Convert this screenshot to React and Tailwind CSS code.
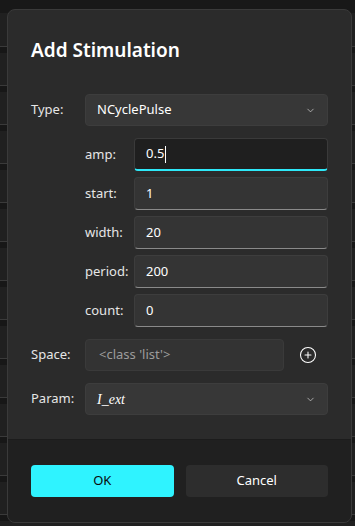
import { ChevronDown, CirclePlus } from 'lucide-react';

const font = { fontFamily: '"Noto Sans", "Open Sans", sans-serif' };

const params = [
  { name: 'amp', value: '0.5', focused: true },
  { name: 'start', value: '1' },
  { name: 'width', value: '20' },
  { name: 'period', value: '200' },
  { name: 'count', value: '0' },
];

const App = () => {
  return (
    <div className="relative w-[355px] h-[526px] overflow-hidden bg-[#1e1e1e] font-['Noto_Sans',sans-serif]">
      {/* Background list behind the dialog */}
      <div className="h-[13px] bg-[#181818]" />
      <div className="h-[34px] bg-[#202020] border-b border-[#3a3a3a]" />
      {Array.from({ length: 13 }).map((_, i) => (
        <div key={i} className="h-[39px] flex flex-col border-b border-[#3a3a3a]">
          <div className="h-[6px] bg-[#171717]" />
          <div className="flex-1 bg-[#202020]" />
        </div>
      ))}

      {/* Dialog */}
      <div className="absolute left-[7px] top-[9px] w-[345px] h-[514px] rounded-lg border border-[#3a3a3a] bg-[#2b2b2b] overflow-hidden flex flex-col">
        <div className="flex-1 px-[23px]">
          <h2 className="mt-[26px] text-[19px] font-semibold text-white leading-[28px]">Add Stimulation</h2>

          <div className="mt-[30px] flex items-center h-[32px]">
            <span className="w-[54px] text-[13px] text-[#e6e6e6]">Type:</span>
            <div className="flex-1 h-[32px] rounded bg-[#373737] border border-[#3d3d3d] flex items-center justify-between pl-[11px] pr-[11px]">
              <span className="text-[13px] text-white">NCyclePulse</span>
              <ChevronDown size={11} strokeWidth={1.6} className="text-[#d0d0d0]" />
            </div>
          </div>

          <div className="mt-[12px] ml-[54px] flex flex-col gap-[6px]">
            {params.map((p) => (
              <div key={p.name} className="flex items-center h-[33px]">
                <span className="w-[49px] text-[13px] text-[#e6e6e6]">{p.name}:</span>
                {p.focused ? (
                  <div className="flex-1 h-[33px] rounded bg-[#1f1f1f] border border-[#3a3a3a] border-b-2 border-b-[#2ee8f8] flex items-center pl-[11px]">
                    <span className="text-[13px] text-white">{p.value}</span>
                    <span className="w-px h-[17px] bg-white ml-px" />
                  </div>
                ) : (
                  <div className="flex-1 h-[33px] rounded bg-[#343434] border border-[#3d3d3d] border-b-[#8a8a8a] flex items-center pl-[11px]">
                    <span className="text-[13px] text-white">{p.value}</span>
                  </div>
                )}
              </div>
            ))}
          </div>

          <div className="mt-[12px] flex items-center h-[32px]">
            <span className="w-[54px] text-[13px] text-[#e6e6e6]">Space:</span>
            <div className="w-[199px] h-[32px] rounded bg-[#333333] border border-[#3a3a3a] flex items-center pl-[13px]">
              <span className="text-[13px] text-[#9c9c9c]">&lt;class 'list'&gt;</span>
            </div>
            <div className="flex-1 flex justify-center pl-[3px]">
              <CirclePlus size={18} strokeWidth={1.4} className="text-white" />
            </div>
          </div>

          <div className="mt-[12px] flex items-center h-[32px]">
            <span className="w-[54px] text-[13px] text-[#e6e6e6]">Param:</span>
            <div className="flex-1 h-[32px] rounded bg-[#373737] border border-[#3d3d3d] flex items-center justify-between pl-[11px] pr-[11px]">
              <span className="text-[14px] italic text-white font-['Liberation_Serif',serif]">I_ext</span>
              <ChevronDown size={11} strokeWidth={1.6} className="text-[#d0d0d0]" />
            </div>
          </div>
        </div>

        <div className="h-[83px] bg-[#202020] border-t border-[#1c1c1c] flex items-start gap-[12px] px-[23px] pt-[25px]">
          <button className="flex-1 h-[32px] rounded bg-[#2ff3ff] text-[13px] text-[#0a0a0a]" style={font}>OK</button>
          <button className="flex-1 h-[32px] rounded bg-[#2d2d2d] text-[13px] text-white" style={font}>Cancel</button>
        </div>
      </div>
    </div>
  );
};

export default App;
